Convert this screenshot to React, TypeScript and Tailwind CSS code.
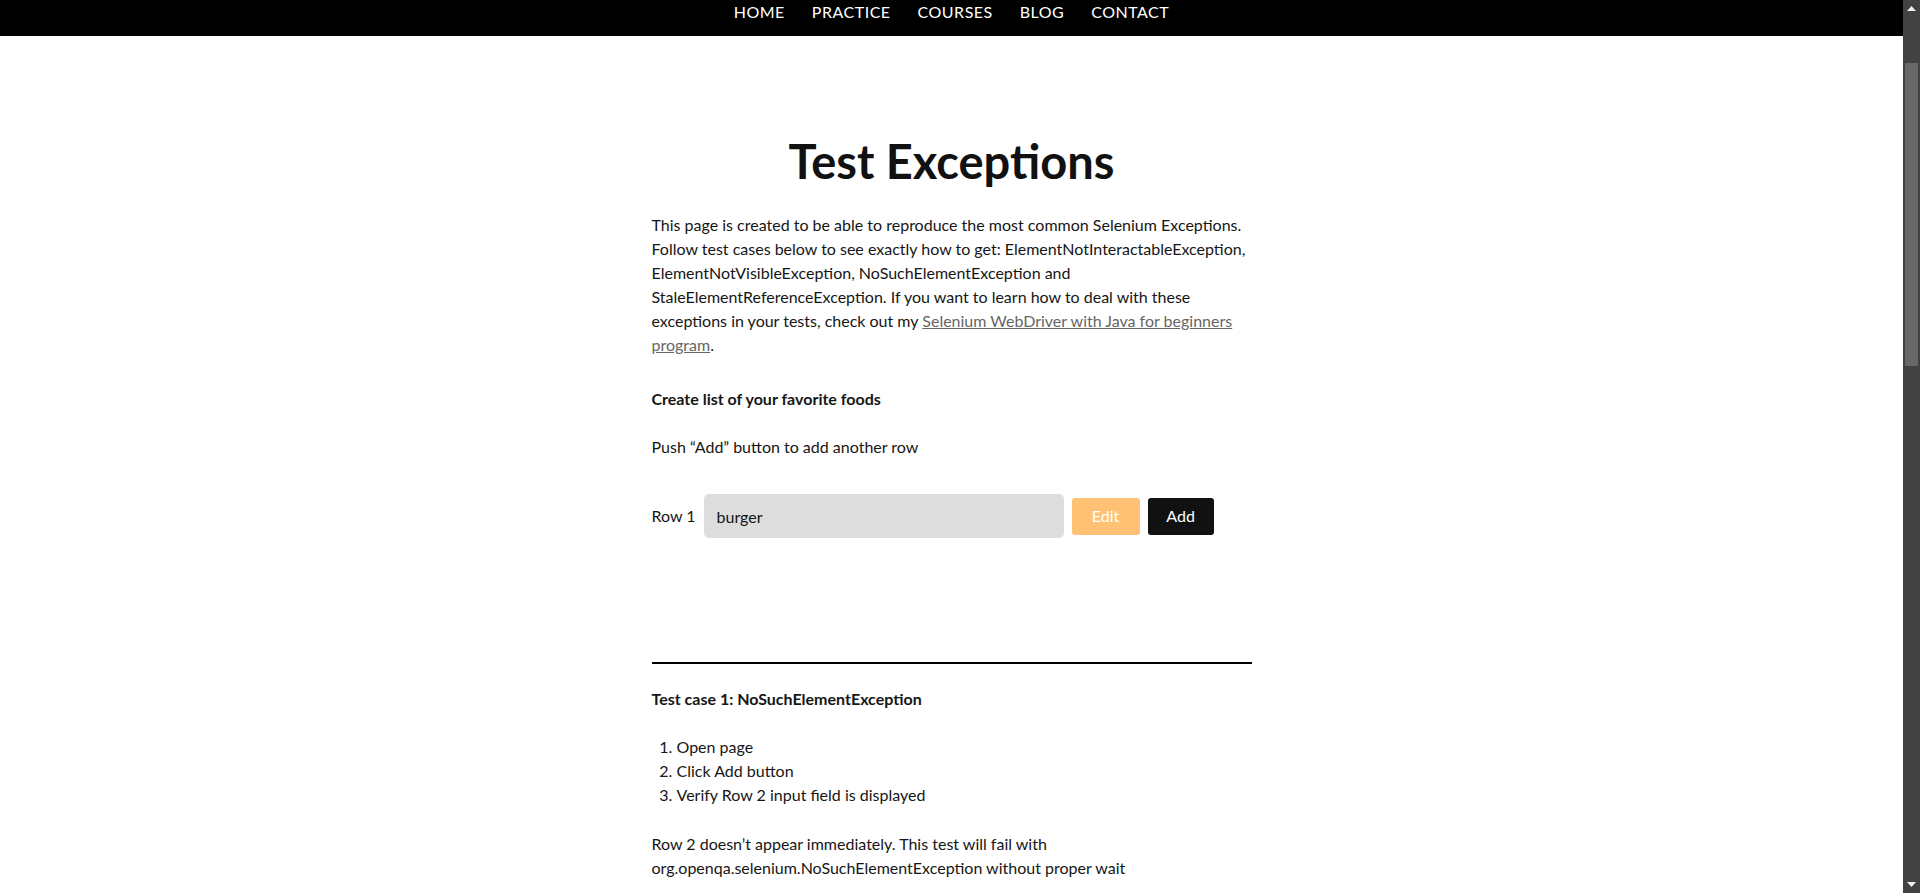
import { useState } from 'react';

const navItems = ['HOME', 'PRACTICE', 'COURSES', 'BLOG', 'CONTACT'];

function Scrollbar() {
  return (
    <div className="w-[17px] shrink-0 bg-[#424242] flex flex-col items-center">
      <div className="h-[17px] w-full flex items-start justify-center pt-[6px]">
        <svg width="9" height="5" viewBox="0 0 9 5">
          <polygon points="4.5,0 9,5 0,5" fill="#f0f0f0" />
        </svg>
      </div>
      <div className="mt-[46px] w-[13px] h-[303px] bg-[#686868]" />
      <div className="flex-1" />
      <div className="h-[17px] w-full flex items-end justify-center pb-[6px]">
        <svg width="9" height="5" viewBox="0 0 9 5">
          <polygon points="0,0 9,0 4.5,5" fill="#f0f0f0" />
        </svg>
      </div>
    </div>
  );
}

export default function App() {
  const [food, setFood] = useState('burger');

  return (
    <div className="h-[893px] flex overflow-hidden bg-white font-['Lato',sans-serif] text-[#161616]">
      <div className="flex-1 min-w-0 flex flex-col">
        {/* Top navigation */}
        <nav className="h-[36px] bg-black flex justify-center gap-[27px] pt-[3px] shrink-0">
          {navItems.map((item) => (
            <a key={item} className="text-white text-[16px] tracking-[0.5px] leading-[18px] cursor-pointer">
              {item}
            </a>
          ))}
        </nav>

        {/* Page content */}
        <main className="w-[600px] mx-auto">
          <h1 className="mt-[97px] text-center text-[47px] leading-[1.2] font-bold text-[#111]">
            Test Exceptions
          </h1>

          <p className="mt-[24px] text-[16px] leading-[24px]">
            This page is created to be able to reproduce the most common Selenium Exceptions. Follow test cases below
            to see exactly how to get: ElementNotInteractableException, ElementNotVisibleException,
            NoSuchElementException and StaleElementReferenceException. If you want to learn how to deal with these
            exceptions in your tests, check out my{' '}
            <a className="text-[#666] underline cursor-pointer">Selenium WebDriver with Java for beginners program</a>.
          </p>

          <p className="mt-[30px] text-[16px] leading-[24px] font-bold">Create list of your favorite foods</p>

          <p className="mt-[24px] text-[16px] leading-[24px]">Push “Add” button to add another row</p>

          <div className="mt-[35px] flex items-center gap-[8px]">
            <label className="text-[16px] leading-[24px]">Row 1</label>
            <input
              value={food}
              onChange={(e) => setFood(e.target.value)}
              className="w-[360px] h-[44px] bg-[#dddddd] rounded-[5px] px-[13px] text-[16px] text-[#161616] outline-none"
            />
            <button className="w-[68px] h-[37px] bg-[#ffc274] text-white text-[16px] rounded-[3px]">Edit</button>
            <button className="w-[66px] h-[37px] bg-[#111] text-white text-[16px] rounded-[3px]">Add</button>
          </div>

          <hr className="mt-[124px] border-0 h-[2px] bg-black" />

          <p className="mt-[23px] text-[16px] leading-[24px] font-bold">Test case 1: NoSuchElementException</p>

          <ol className="mt-[24px] list-decimal pl-[25px] text-[16px] leading-[24px]">
            <li>Open page</li>
            <li>Click Add button</li>
            <li>Verify Row 2 input field is displayed</li>
          </ol>

          <p className="mt-[25px] text-[16px] leading-[24px]">
            Row 2 doesn’t appear immediately. This test will fail with
            <br />
            org.openqa.selenium.NoSuchElementException without proper wait
          </p>
        </main>
      </div>
      <Scrollbar />
    </div>
  );
}
